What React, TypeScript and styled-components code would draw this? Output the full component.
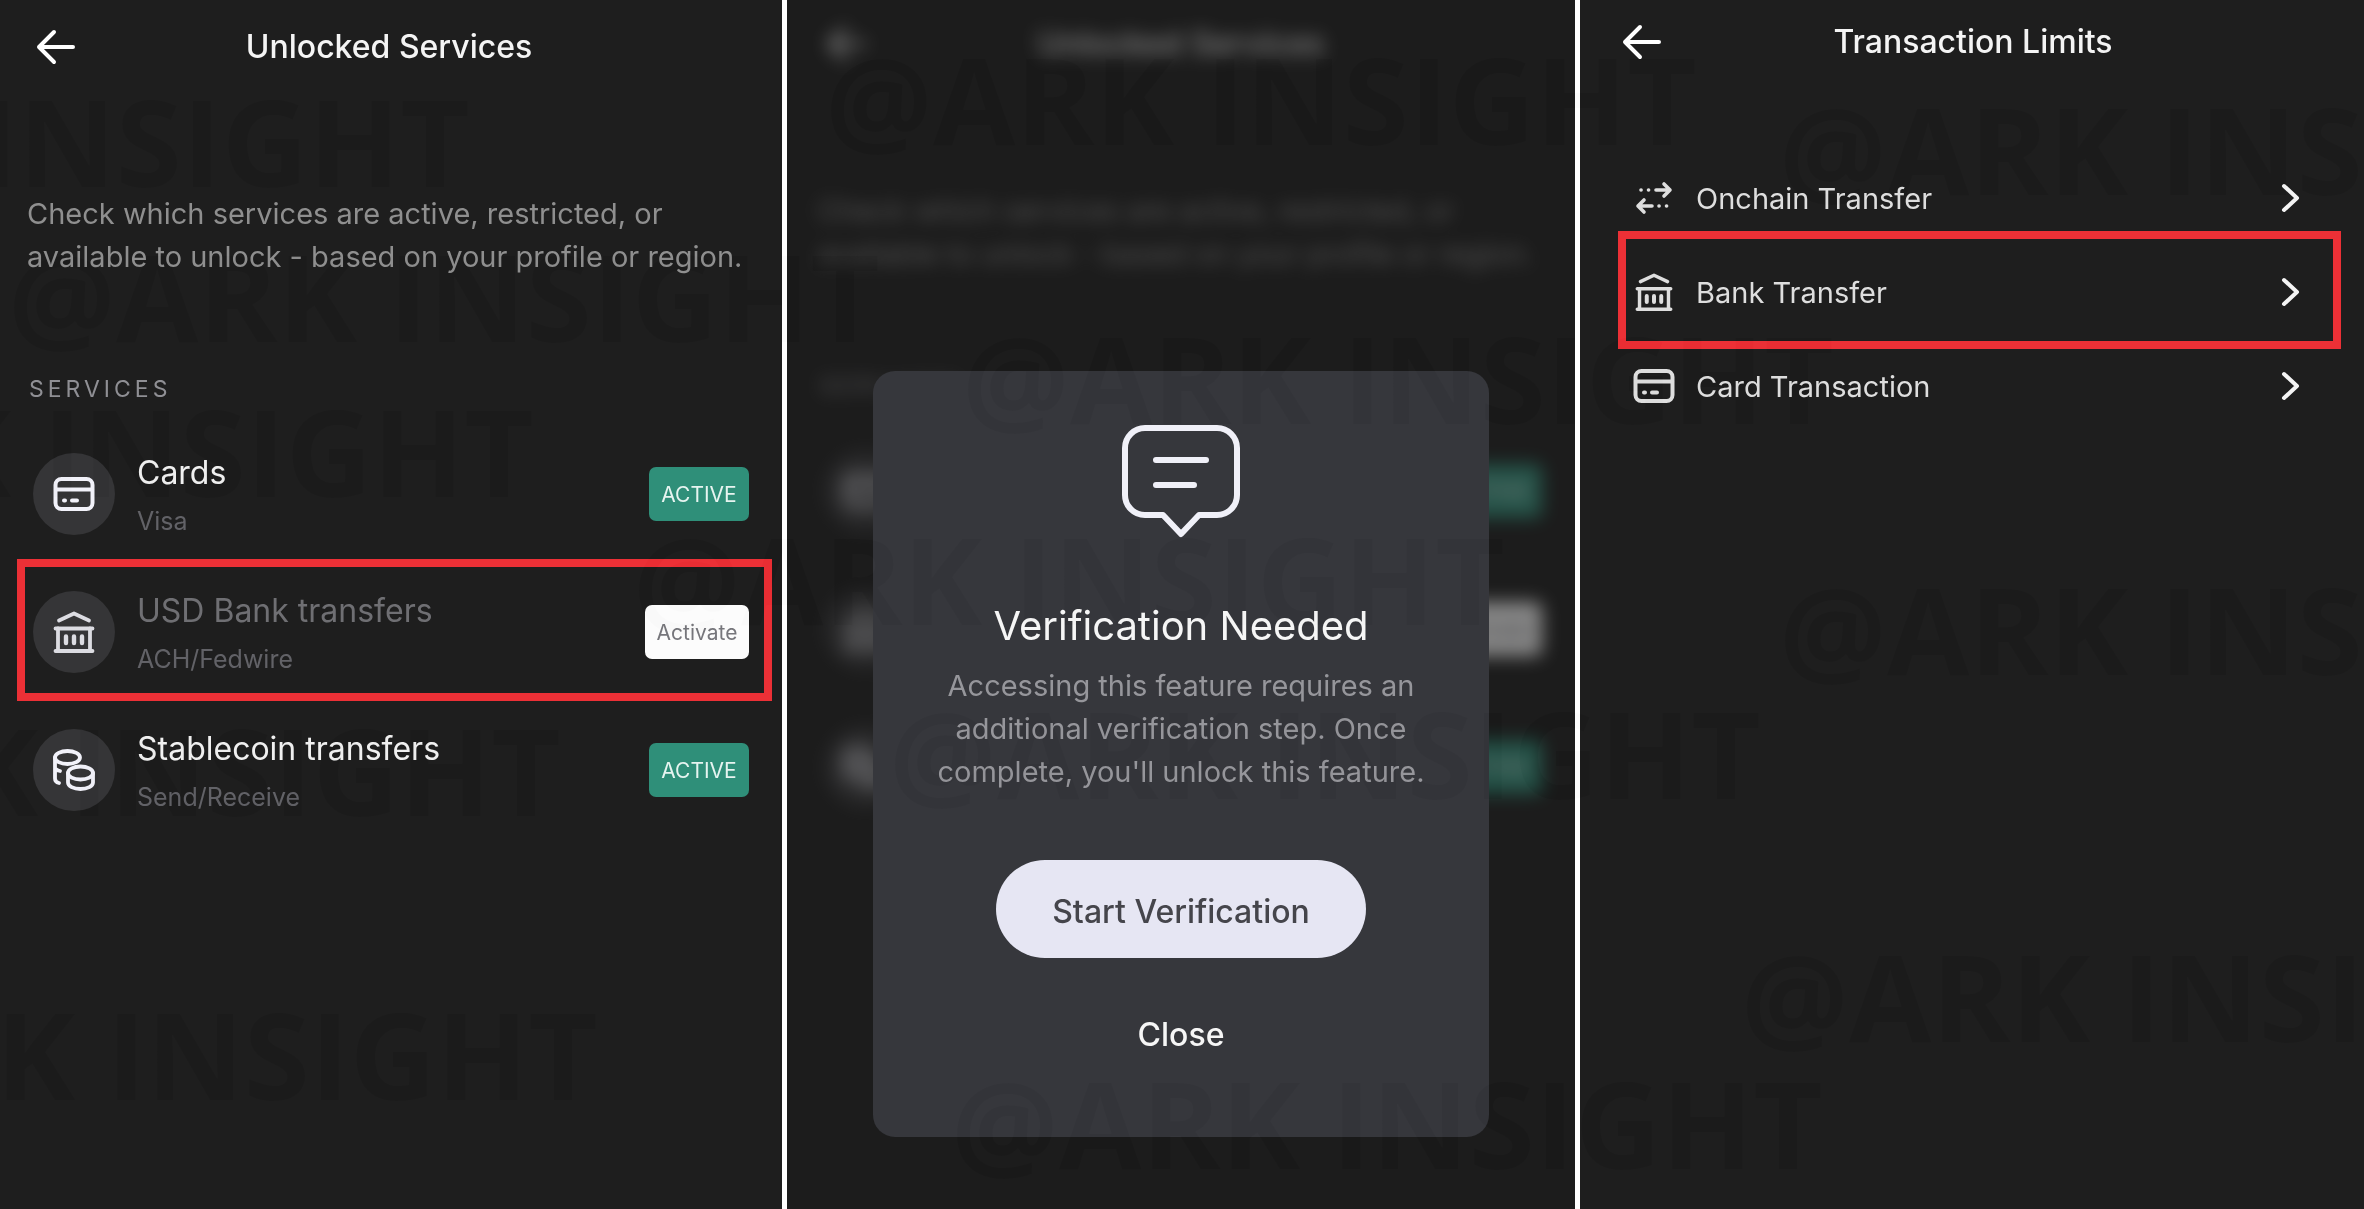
import React from "react";
import styled, { createGlobalStyle, css } from "styled-components";

const GlobalStyle = createGlobalStyle`
  *, *::before, *::after { box-sizing: border-box; }
  body { margin: 0; background: #ffffff; font-family: Inter, "Liberation Sans", sans-serif; }
  button { font: inherit; color: inherit; border: 0; padding: 0; background: none; cursor: pointer; }
  h1, h2, h3, p, ul { margin: 0; padding: 0; font-weight: 400; }
  ul { list-style: none; }
  svg { display: block; flex: none; }
`;

const Board = styled.main`
  position: relative;
  display: grid;
  grid-template-columns: 782fr 788fr 784fr;
  gap: 5px;
  min-height: 100vh;
  overflow: hidden;
`;

const Panel = styled.section<{ $dim?: boolean }>`
  position: relative;
  min-width: 0;
  overflow: hidden;
  background: ${(p) => (p.$dim ? "#1c1c1c" : "#1e1e1e")};
`;

const Screen = styled.div<{ $top: number; $inset?: number }>`
  padding-top: ${(p) => p.$top}px;
  padding-left: ${(p) => p.$inset ?? 0}px;
`;

const TopBar = styled.header`
  display: grid;
  grid-template-columns: 80px 1fr 80px;
  align-items: center;
  height: 68px;
  padding-right: 4px;
`;

const BackButton = styled.button`
  display: flex;
  align-items: center;
  height: 48px;
  padding-left: 36px;
  color: #ffffff;
`;

const ScreenTitle = styled.h1`
  color: #f4f4f4;
  font-size: 32px;
  font-weight: 500;
  line-height: 40px;
  text-align: center;
`;

const Intro = styled.p`
  max-width: 780px;
  margin-top: 111px;
  padding: 0 27px;
  color: #8f8f8f;
  font-size: 29px;
  line-height: 43px;
`;

const SectionLabel = styled.h2`
  margin-top: 97px;
  padding-left: 29px;
  color: #8f8f94;
  font-size: 23px;
  line-height: 28px;
  letter-spacing: 4px;
`;

const ServiceList = styled.ul`
  display: flex;
  flex-direction: column;
  padding: 22px 10px 0 17px;
`;

const marked = css`
  border-color: #ec3036;
`;

const ServiceRow = styled.li<{ $marked?: boolean }>`
  display: flex;
  align-items: center;
  height: 142px;
  margin-top: -4px;
  padding: 4px 15px 0 8px;
  border: 8px solid transparent;
  ${(p) => p.$marked && marked}
`;

const RoundIcon = styled.span<{ $muted?: boolean }>`
  display: grid;
  place-items: center;
  flex: none;
  width: 82px;
  height: 82px;
  border-radius: 50%;
  background: #353537;
  color: ${(p) => (p.$muted ? "#dcdce2" : "#f2f2fa")};
`;

const ServiceText = styled.div`
  flex: 1;
  min-width: 0;
  padding: 6px 0 0 22px;
`;

const ServiceName = styled.h3<{ $muted?: boolean }>`
  color: ${(p) => (p.$muted ? "#6f6f73" : "#f0f0f0")};
  font-size: 32px;
  line-height: 48px;
`;

const ServiceNote = styled.p`
  color: #626267;
  font-size: 25px;
  line-height: 48px;
`;

const Badge = styled.span`
  display: grid;
  place-items: center;
  width: 100px;
  height: 54px;
  border-radius: 7px;
  background: #2f8f79;
  color: #e6f4f0;
  font-size: 21px;
`;

const ActivateButton = styled.button`
  width: 104px;
  height: 54px;
  border-radius: 7px;
  background: #fcfcfc;
  color: #77777c;
  font-size: 21px;
`;

const Blurred = styled.div`
  filter: blur(9px);
  opacity: 0.48;
`;

const Overlay = styled.div`
  position: absolute;
  inset: 0;
  display: flex;
  align-items: flex-start;
  justify-content: center;
  padding-top: 371px;
`;

const Dialog = styled.div`
  display: flex;
  flex-direction: column;
  align-items: center;
  width: 616px;
  padding: 54px 48px 74px;
  border-radius: 22px;
  background: #36373c;
  text-align: center;
`;

const DialogTitle = styled.h2`
  margin-top: 62px;
  color: #f6f6f6;
  font-size: 40px;
  line-height: 52px;
`;

const DialogText = styled.p`
  width: 520px;
  margin-top: 12px;
  color: #96969b;
  font-size: 29px;
  line-height: 43px;
`;

const PrimaryButton = styled.button`
  width: 370px;
  height: 98px;
  margin-top: 67px;
  padding-top: 4px;
  border-radius: 49px;
  background: #e6e6f3;
  color: #45454b;
  font-size: 32px;
  font-weight: 500;
`;

const TextButton = styled.button`
  margin-top: 49px;
  padding: 8px 24px;
  color: #f6f6f6;
  font-size: 32px;
  font-weight: 500;
  line-height: 40px;
`;

const LimitList = styled.ul`
  padding: 61px 23px 0 32px;
`;

const LimitRow = styled.li<{ $marked?: boolean }>`
  height: 118px;
  margin-bottom: -24px;
  border: 8px solid transparent;
  ${(p) => p.$marked && marked}
`;

const LimitButton = styled.button`
  display: flex;
  align-items: center;
  width: 100%;
  height: 102px;
  padding: 4px 31px 0 6px;
  color: #dedede;
  font-size: 29px;
  text-align: left;
`;

const LimitIcon = styled.span`
  display: grid;
  place-items: center;
  width: 44px;
  height: 44px;
`;

const LimitName = styled.span`
  flex: 1;
  padding-left: 20px;
`;

const WatermarkLayer = styled.div`
  position: absolute;
  inset: 0;
  overflow: hidden;
  pointer-events: none;
  mix-blend-mode: difference;
`;

const Watermark = styled.span`
  position: absolute;
  color: #030303;
  font-family: "Open Sans", "Noto Sans", sans-serif;
  font-size: 120px;
  font-weight: 700;
  line-height: 120px;
  white-space: nowrap;
`;

const watermarks = [
  [-402, 81],
  [8, 236],
  [-338, 391],
  [633, 519],
  [-311, 710],
  [-274, 994],
  [825, 39],
  [962, 318],
  [889, 693],
  [951, 1063],
  [1779, 89],
  [1779, 569],
  [1741, 936],
];

const ArrowLeft = () => (
  <svg width="40" height="36" viewBox="0 0 40 36" fill="none" stroke="currentColor" strokeWidth="4" strokeLinecap="round" strokeLinejoin="round">
    <path d="M37 18H3M18 3 3 18l15 15" />
  </svg>
);

const Chevron = () => (
  <svg width="22" height="32" viewBox="0 0 22 32" fill="none" stroke="#f4f4f4" strokeWidth="4" strokeLinecap="round" strokeLinejoin="round">
    <path d="M4 4l13 12L4 28" />
  </svg>
);

const CardIcon = () => (
  <svg width="42" height="36" viewBox="0 0 42 36" fill="none" stroke="currentColor" strokeWidth="4" strokeLinecap="round">
    <rect x="2.5" y="3" width="37" height="30" rx="6" />
    <path d="M3 13.500h36" />
    <path d="M11 24.500h1M19 24.500h5" />
  </svg>
);

const BankIcon = ({ size = 42 }: { size?: number }) => (
  <svg width={size} height={size} viewBox="0 0 42 42" fill="none" stroke="currentColor" strokeWidth="3.800" strokeLinecap="round" strokeLinejoin="round">
    <path d="M6 9.500 21 2.500 36 9.500" />
    <path d="M2.500 17.500h37M2.500 40h37" />
    <path d="M5 17.500V40M37 17.500V40" />
    <path d="M13 25.500v6.500M21 25.500v6.500M29 25.500v6.500" strokeWidth="4.400" />
  </svg>
);

const CoinsIcon = () => (
  <svg width="42" height="42" viewBox="0 0 42 42" fill="none" stroke="currentColor" strokeWidth="3.800" strokeLinecap="round">
    <ellipse cx="14.5" cy="8.500" rx="12.500" ry="6.500" />
    <path d="M2 8.500v21c0 2.500 2 4 4 4.500M2 18.500c0 1.500 2.500 3 5 3.500" />
    <ellipse cx="27.500" cy="24" rx="12.500" ry="6.500" />
    <path d="M15 24v9.500c0 3.500 5.500 6.500 12.500 6.500s12.500-3 12.500-6.500V24" />
  </svg>
);

const SwapIcon = () => (
  <svg width="38" height="34" viewBox="0 0 38 34" fill="none" stroke="currentColor" strokeWidth="3.600" strokeLinecap="round" strokeLinejoin="round">
    <path d="M21 9h14M29 3l6 6-6 6" />
    <path d="M6 9h.1M13.500 9h.1" />
    <path d="M17 25H3M9 19l-6 6 6 6" />
    <path d="M24 25h.1M31.500 25h.1" />
  </svg>
);

const MessageIcon = () => (
  <svg width="118" height="113" viewBox="0 0 118 113" fill="none" stroke="#f0f0f8" strokeWidth="6" strokeLinecap="round" strokeLinejoin="round">
    <path d="M23 3h72a20 20 0 0 1 20 20v47a20 20 0 0 1-20 20H77L59 109 41 90H23A20 20 0 0 1 3 70V23A20 20 0 0 1 23 3Z" />
    <path d="M34 35h50M34 60h38" />
  </svg>
);

const services = [
  { name: "Cards", note: "Visa", icon: <CardIcon />, active: true },
  { name: "USD Bank transfers", note: "ACH/Fedwire", icon: <BankIcon />, active: false },
  { name: "Stablecoin transfers", note: "Send/Receive", icon: <CoinsIcon />, active: true },
];

const limits = [
  { name: "Onchain Transfer", icon: <SwapIcon /> },
  { name: "Bank Transfer", icon: <BankIcon size={38} />, marked: true },
  { name: "Card Transaction", icon: <CardIcon /> },
];

const ServicesScreen = ({ backdrop = false }: { backdrop?: boolean }) => (
  <Screen $top={backdrop ? 10 : 13} $inset={backdrop ? 4 : 0}>
    <TopBar>
      <BackButton type="button" aria-label="Back" tabIndex={backdrop ? -1 : 0}>
        <ArrowLeft />
      </BackButton>
      <ScreenTitle>Unlocked Services</ScreenTitle>
    </TopBar>
    <Intro>Check which services are active, restricted, or available to unlock - based on your profile or region.</Intro>
    <SectionLabel>SERVICES</SectionLabel>
    <ServiceList>
      {services.map((s) => (
        <ServiceRow key={s.name} $marked={!s.active && !backdrop}>
          <RoundIcon $muted={!s.active}>{s.icon}</RoundIcon>
          <ServiceText>
            <ServiceName $muted={!s.active}>{s.name}</ServiceName>
            <ServiceNote>{s.note}</ServiceNote>
          </ServiceText>
          {s.active ? (
            <Badge>ACTIVE</Badge>
          ) : (
            <ActivateButton type="button" tabIndex={backdrop ? -1 : 0}>Activate</ActivateButton>
          )}
        </ServiceRow>
      ))}
    </ServiceList>
  </Screen>
);

export default function App() {
  return (
    <>
      <GlobalStyle />
      <Board>
        <Panel>
          <ServicesScreen />
        </Panel>
        <Panel $dim>
          <Blurred aria-hidden="true">
            <ServicesScreen backdrop />
          </Blurred>
          <Overlay>
            <Dialog role="dialog" aria-labelledby="verify-title">
              <MessageIcon />
              <DialogTitle id="verify-title">Verification Needed</DialogTitle>
              <DialogText>Accessing this feature requires an additional verification step. Once complete, you'll unlock this feature.</DialogText>
              <PrimaryButton type="button">Start Verification</PrimaryButton>
              <TextButton type="button">Close</TextButton>
            </Dialog>
          </Overlay>
        </Panel>
        <Panel>
          <Screen $top={8} $inset={6}>
            <TopBar>
              <BackButton type="button" aria-label="Back">
                <ArrowLeft />
              </BackButton>
              <ScreenTitle>Transaction Limits</ScreenTitle>
            </TopBar>
            <LimitList>
              {limits.map((l) => (
                <LimitRow key={l.name} $marked={l.marked}>
                  <LimitButton type="button">
                    <LimitIcon>{l.icon}</LimitIcon>
                    <LimitName>{l.name}</LimitName>
                    <Chevron />
                  </LimitButton>
                </LimitRow>
              ))}
            </LimitList>
          </Screen>
        </Panel>
        <WatermarkLayer aria-hidden="true">
          {watermarks.map(([x, y]) => (
            <Watermark key={`${x}-${y}`} style={{ left: x, top: y }}>@ARK INSIGHT</Watermark>
          ))}
        </WatermarkLayer>
      </Board>
    </>
  );
}
